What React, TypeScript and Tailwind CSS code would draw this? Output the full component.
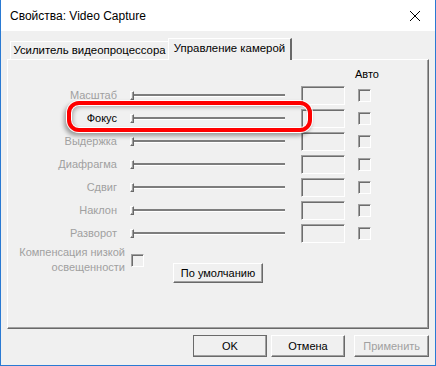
const ROWS = [
  { label: "Масштаб", enabled: false },
  { label: "Фокус", enabled: true },
  { label: "Выдержка", enabled: false },
  { label: "Диафрагма", enabled: false },
  { label: "Сдвиг", enabled: false },
  { label: "Наклон", enabled: false },
  { label: "Разворот", enabled: false },
];

function SliderRow({ label, enabled }: { label: string; enabled: boolean }) {
  return (
    <div className="flex items-center h-[19px] mb-[4px]">
      <div
        className={`w-[109px] text-right text-[11px] leading-[13px] whitespace-nowrap ${
          enabled ? "text-black" : "text-[#a0a0a0]"
        }`}
      >
        {label}
      </div>
      {/* slider */}
      <div className="ml-[13px] w-[155px] flex items-center -mt-[1px]">
        <div className="w-[4px] h-[9px] bg-[#f0f0f0] border-t border-l border-white border-r border-b border-r-[#696969] border-b-[#696969] shadow-[inset_-1px_-1px_0_#a0a0a0]" />
        <div className="flex-1 h-[2px] bg-[#7d7d7d] shadow-[0_1px_0_#ffffff]" />
      </div>
      {/* value box */}
      <div className="ml-[16px] w-[44px] h-[19px] border-t border-l border-[#a0a0a0] border-r border-b border-r-white border-b-white shadow-[inset_1px_1px_0_#6d6d6d]" />
      {/* auto checkbox */}
      <div className="ml-[13px] w-[13px] h-[13px] border-t border-l border-[#a0a0a0] border-r border-b border-r-white border-b-white shadow-[inset_1px_1px_0_#6d6d6d]" />
    </div>
  );
}

function Button({
  text,
  isDefault,
  disabled,
  className,
}: {
  text: string;
  isDefault?: boolean;
  disabled?: boolean;
  className?: string;
}) {
  return (
    <div
      className={`${className ?? ""} ${
        isDefault ? "outline outline-1 outline-[#6a6a6a] -outline-offset-1" : ""
      } flex items-center justify-center whitespace-nowrap bg-[#f0f0f0] border-t border-l border-white border-r border-b border-r-[#696969] border-b-[#696969] shadow-[inset_-1px_-1px_0_#a0a0a0] text-[11px] ${
        disabled ? "text-[#a0a0a0]" : "text-black"
      }`}
    >
      {text}
    </div>
  );
}

export default function App() {
  return (
    <div className="relative w-[436px] h-[366px] flex flex-col bg-[#f0f0f0] border-x border-b border-[#2a7ad3] font-['Liberation_Sans',Arial,sans-serif] select-none">
      {/* title bar */}
      <div className="h-[31px] bg-white flex items-center pl-[9px] pr-[10px]">
        <div className="text-[12px] text-black leading-none flex-1">
          Свойства: Video Capture
        </div>
        <svg width="12" height="12" viewBox="0 0 12 12" className="mr-[4px]">
          <path d="M1 1 L11 11 M11 1 L1 11" stroke="#000" strokeWidth="1" />
        </svg>
      </div>

      {/* body */}
      <div className="flex-1 flex flex-col px-[6px] pt-[7px]">
        {/* tabs */}
        <div className="flex items-end h-[21px] pl-[3px] relative z-10">
          <div className="h-[18px] w-[158px] flex items-center justify-center whitespace-nowrap text-[11.4px] text-black border-t border-l border-white bg-[#f0f0f0] pt-[1px]">
            Усилитель видеопроцессора
          </div>
          <div className="h-[22px] -mb-[1px] w-[124px] flex items-center justify-center whitespace-nowrap text-[11.4px] text-black border-t border-l border-white border-r-2 border-r-[#696969] bg-[#f0f0f0] pb-[2px]">
            Управление камерой
          </div>
        </div>

        {/* panel */}
        <div className="h-[270px] w-[422px] border-t border-l border-white border-r border-b border-r-[#696969] border-b-[#696969] shadow-[inset_-1px_-1px_0_#a0a0a0] pt-[7px] flex flex-col">
          <div className="pl-[347px] text-[11px] leading-[14px] text-black h-[14px] mb-[5px]">
            Авто
          </div>
          {ROWS.map((row) => (
            <SliderRow key={row.label} label={row.label} enabled={row.enabled} />
          ))}
          <div className="flex items-start -mt-[2px]">
            <div className="w-[117px] text-right text-[11px] leading-[15px] text-[#a0a0a0] whitespace-nowrap">
              Компенсация низкой
              <br />
              освещенности
            </div>
            <div className="ml-[6px] mt-[9px] w-[13px] h-[13px] border-t border-l border-[#a0a0a0] border-r border-b border-r-white border-b-white shadow-[inset_1px_1px_0_#6d6d6d]" />
            <Button text="По умолчанию" className="ml-[29px] mt-[18px] w-[90px] h-[20px]" />
          </div>
        </div>

        {/* dialog buttons */}
        <div className="flex mt-[6px] pl-[186px]">
          <Button text="OK" isDefault className="w-[74px] h-[22px]" />
          <Button text="Отмена" className="ml-[4px] w-[75px] h-[22px]" />
          <Button text="Применить" disabled className="ml-[9px] w-[75px] h-[22px]" />
        </div>
      </div>

      {/* red highlight */}
      <div className="absolute left-[66px] top-[101px] w-[245px] h-[31px] rounded-[12px] border-[4px] border-[#ff0000] shadow-[0_0_0_1px_#ffffff,inset_0_0_0_1px_#ffffff,-2px_3px_4px_1px_rgba(0,0,0,0.35),inset_2px_2px_4px_rgba(0,0,0,0.3)] pointer-events-none" />
    </div>
  );
}
